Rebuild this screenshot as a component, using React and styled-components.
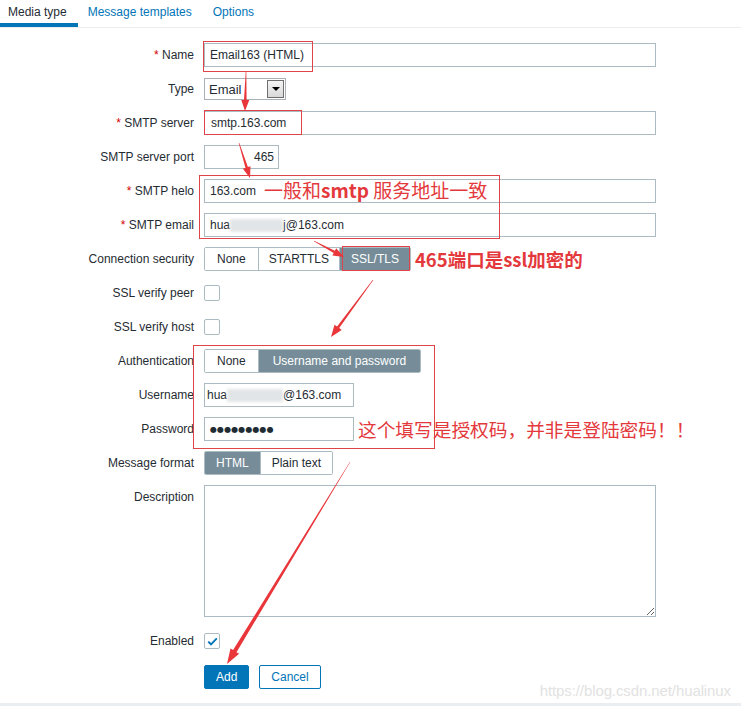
import React from 'react'
import styled, { createGlobalStyle } from 'styled-components'

const GlobalStyle = createGlobalStyle`
  html, body { margin: 0; padding: 0; background: #ffffff; overflow: hidden; }
  body {
    font-family: "Liberation Sans", Arial, sans-serif;
    font-size: 12px;
    color: #1f2c33;
  }
`

const RED = '#e4393c'
const BLUE = '#0275b8'
const LINE = '#acbbc2'

const Page = styled.div`
  position: relative;
  width: 741px;
  height: 706px;
  display: flex;
  flex-direction: column;
`

const TabBar = styled.div`
  display: flex;
  border-bottom: 1px solid #ebeef0;
`

const Tab = styled.div`
  box-sizing: border-box;
  height: 27px;
  padding: 5px 11px 0 ${p => (p.$first ? '8px' : '10px')};
  line-height: 14px;
  color: ${p => (p.$active ? '#1f2c33' : BLUE)};
  border-bottom: 4px solid ${p => (p.$active ? BLUE : 'transparent')};
`

const Form = styled.div`
  display: grid;
  grid-template-columns: 194px 452px;
  column-gap: 10px;
  row-gap: 10px;
  padding-top: 15px;
  align-items: start;
`

const Label = styled.div`
  text-align: right;
  line-height: 24px;
  white-space: nowrap;
  margin-top: ${p => p.$mt || 0}px;
`

const Req = styled.span`
  color: #d40000;
`

const Field = styled.div`
  display: flex;
  align-items: center;
  gap: ${p => p.$gap || 0}px;
  min-height: 24px;
  margin-top: ${p => p.$mt || 0}px;
`

const TextInput = styled.input`
  box-sizing: border-box;
  flex-shrink: 0;
  width: ${p => p.$w || '100%'};
  height: 24px;
  margin: 0;
  border: 1px solid ${LINE};
  border-radius: 0;
  padding: 0 ${p => (p.$align === 'right' ? '4px' : '5px')};
  font: inherit;
  color: inherit;
  background: #fff;
  text-align: ${p => p.$align || 'left'};
  outline: none;
`

const InputBox = styled.div`
  box-sizing: border-box;
  flex-shrink: 0;
  width: ${p => p.$w || '100%'};
  height: 24px;
  border: 1px solid ${LINE};
  padding: 0 ${p => p.$pad || 5}px;
  display: flex;
  align-items: center;
  white-space: nowrap;
  overflow: hidden;
`

const Blur = styled.span`
  display: inline-block;
  width: ${p => p.$w}px;
  height: 13px;
  background: #e2e5e7;
  filter: blur(1.5px);
`

const Dots = styled.span`
  font-family: "DejaVu Sans", sans-serif;
  font-size: 8px;
  letter-spacing: 0.1px;
  color: #1f2c33;
`

const SelectBox = styled.div`
  box-sizing: border-box;
  width: 82px;
  height: 22px;
  border: 1px solid #a9b1b6;
  display: flex;
  align-items: center;
  padding-left: 4px;
  font-size: 13px;
`

const SelectArrow = styled.div`
  box-sizing: border-box;
  margin-left: auto;
  margin-right: 1px;
  width: 17px;
  height: 18px;
  border: 1px solid #6f6f6f;
  background: linear-gradient(#f4f4f4, #d9d9d9);
  display: flex;
  align-items: center;
  justify-content: center;
  &::after {
    content: '';
    border-left: 4px solid transparent;
    border-right: 4px solid transparent;
    border-top: 4px solid #000;
  }
`

const SegGroup = styled.div`
  display: inline-flex;
  flex-shrink: 0;
  box-sizing: border-box;
  height: 24px;
  border: 1px solid ${LINE};
  border-radius: 2px;
  overflow: hidden;
`

const SegItem = styled.div`
  padding: 0 ${p => p.$pad || 11}px;
  line-height: 22px;
  white-space: nowrap;
  background: ${p => (p.$on ? '#768d99' : '#fff')};
  color: ${p => (p.$on ? '#fff' : '#1f2c33')};
  & + & {
    border-left: 1px solid ${LINE};
  }
`

const Check = styled.div`
  box-sizing: border-box;
  width: 16px;
  height: 16px;
  border: 1px solid ${LINE};
  border-radius: 2px;
  background: #fff;
  display: flex;
  align-items: center;
  justify-content: center;
`

const TextArea = styled.textarea`
  box-sizing: border-box;
  width: 452px;
  height: 132px;
  margin: 0;
  border: 1px solid ${LINE};
  font: inherit;
  display: block;
  outline: none;
`

const Buttons = styled.div`
  grid-column: 2;
  display: flex;
  gap: 10px;
  margin-top: 2px;
`

const Button = styled.button`
  box-sizing: border-box;
  height: 24px;
  padding: 0 ${p => p.$pad || 11}px;
  border: 1px solid ${BLUE};
  border-radius: 2px;
  background: ${p => (p.$primary ? BLUE : '#fff')};
  color: ${p => (p.$primary ? '#fff' : BLUE)};
  font: inherit;
  font-size: 12px;
  cursor: pointer;
`

const Footer = styled.div`
  margin-top: auto;
  height: 3px;
  background: #ebeef0;
`

const Note = styled.span`
  font-family: "Noto Sans CJK SC", "Liberation Sans", sans-serif;
  font-size: ${p => p.$size || 18}px;
  font-weight: ${p => (p.$bold ? 700 : 400)};
  line-height: 24px;
  color: ${RED};
  white-space: nowrap;
  & b { font-weight: 700; }
`

const FloatNote = styled(Note)`
  position: absolute;
  left: ${p => p.$x}px;
  top: ${p => p.$y}px;
`

const Mark = styled.div`
  position: absolute;
  box-sizing: border-box;
  left: ${p => p.$x}px;
  top: ${p => p.$y}px;
  width: ${p => p.$w}px;
  height: ${p => p.$h}px;
  border: ${p => p.$b || 1}px solid #de4448;
  pointer-events: none;
`

const Arrows = styled.svg`
  position: absolute;
  left: 0;
  top: 0;
  pointer-events: none;
`

const Watermark = styled.div`
  position: absolute;
  right: 10px;
  bottom: 7px;
  font-family: "Liberation Sans", Arial, sans-serif;
  font-size: 15px;
  color: #e2e2e2;
  letter-spacing: -0.1px;
`

// tapered shaft + triangular head, as one polygon
function arrowPoints(x1, y1, x2, y2, w0, w1, hl, hw) {
  const dx = x2 - x1
  const dy = y2 - y1
  const len = Math.hypot(dx, dy)
  const ux = dx / len
  const uy = dy / len
  const nx = -uy
  const ny = ux
  const bx = x2 - ux * hl
  const by = y2 - uy * hl
  const pts = [
    [x1 + nx * w0 / 2, y1 + ny * w0 / 2],
    [bx + nx * w1 / 2, by + ny * w1 / 2],
    [bx + nx * hw / 2, by + ny * hw / 2],
    [x2, y2],
    [bx - nx * hw / 2, by - ny * hw / 2],
    [bx - nx * w1 / 2, by - ny * w1 / 2],
    [x1 - nx * w0 / 2, y1 - ny * w0 / 2],
  ]
  return pts.map(p => p[0].toFixed(1) + ',' + p[1].toFixed(1)).join(' ')
}

const arrows = [
  [246, 72, 245, 111, 0.6, 2.6, 11, 8],
  [239, 143, 250, 178, 0.6, 2.6, 11, 8],
  [314, 241, 344, 257, 0.6, 2.6, 11, 8],
  [373, 280, 331, 337, 0.6, 2.6, 12, 9],
  [350, 462, 227, 664, 0.5, 4, 15, 10],
]

const marks = [
  { x: 203, y: 41, w: 110, h: 31, b: 1.5 },
  { x: 204, y: 110, w: 98, h: 25, b: 1.5 },
  { x: 199, y: 175, w: 301, h: 64, b: 1 },
  { x: 342, y: 246, w: 68, h: 25, b: 1.5 },
  { x: 193, y: 345, w: 242, h: 104, b: 1 },
]

export default function App() {
  return (
    <Page>
      <GlobalStyle />
      <TabBar>
        <Tab $active $first>Media type</Tab>
        <Tab>Message templates</Tab>
        <Tab>Options</Tab>
      </TabBar>

      <Form>
        <Label><Req>*</Req> Name</Label>
        <Field><TextInput readOnly defaultValue="Email163 (HTML)" /></Field>

        <Label>Type</Label>
        <Field>
          <SelectBox>Email<SelectArrow /></SelectBox>
        </Field>

        <Label><Req>*</Req> SMTP server</Label>
        <Field><TextInput readOnly defaultValue="smtp.163.com" style={{ paddingLeft: 6 }} /></Field>

        <Label>SMTP server port</Label>
        <Field><TextInput readOnly $w="75px" $align="right" defaultValue="465" /></Field>

        <Label><Req>*</Req> SMTP helo</Label>
        <Field><TextInput readOnly defaultValue="163.com" /></Field>

        <Label><Req>*</Req> SMTP email</Label>
        <Field>
          <InputBox>hua<Blur $w={53} />j@163.com</InputBox>
        </Field>

        <Label>Connection security</Label>
        <Field $gap={4}>
          <SegGroup>
            <SegItem $pad={12}>None</SegItem>
            <SegItem $pad={10}>STARTTLS</SegItem>
            <SegItem $on $pad={11}>SSL/TLS</SegItem>
          </SegGroup>
          <Note $bold $size={18.5}>465端口是ssl加密的</Note>
        </Field>

        <Label>SSL verify peer</Label>
        <Field><Check /></Field>

        <Label>SSL verify host</Label>
        <Field><Check /></Field>

        <Label>Authentication</Label>
        <Field>
          <SegGroup>
            <SegItem $pad={12}>None</SegItem>
            <SegItem $on $pad={14}>Username and password</SegItem>
          </SegGroup>
        </Field>

        <Label>Username</Label>
        <Field>
          <InputBox $w="150px" $pad={2}>hua<Blur $w={56} />@163.com</InputBox>
        </Field>

        <Label>Password</Label>
        <Field $gap={4}>
          <InputBox $w="150px"><Dots>●●●●●●●●●</Dots></InputBox>
          <Note $size={18.7}>这个填写是授权码，并非是登陆密码！！</Note>
        </Field>

        <Label>Message format</Label>
        <Field>
          <SegGroup>
            <SegItem $on $pad={11}>HTML</SegItem>
            <SegItem $pad={11}>Plain text</SegItem>
          </SegGroup>
        </Field>

        <Label>Description</Label>
        <Field><TextArea /></Field>

        <Label $mt={2}>Enabled</Label>
        <Field $mt={2}>
          <Check>
            <svg width="11" height="9" viewBox="0 0 11 9">
              <path d="M1.2 4.6 L4 7.3 L9.8 1.4" fill="none" stroke={BLUE} strokeWidth="1.9" />
            </svg>
          </Check>
        </Field>

        <Buttons>
          <Button $primary $pad={11}>Add</Button>
          <Button $pad={11}>Cancel</Button>
        </Buttons>
      </Form>

      <Footer />

      <FloatNote $x={264} $y={178} $size={19}>一般和<b>smtp</b> 服务地址一致</FloatNote>

      {marks.map((m, i) => (
        <Mark key={i} $x={m.x} $y={m.y} $w={m.w} $h={m.h} $b={m.b} />
      ))}

      <Arrows width="741" height="706" viewBox="0 0 741 706">
        {arrows.map((a, i) => (
          <polygon key={i} points={arrowPoints(...a)} fill="#e8363a" />
        ))}
      </Arrows>

      <Watermark>https://blog.csdn.net/hualinux</Watermark>
    </Page>
  )
}
